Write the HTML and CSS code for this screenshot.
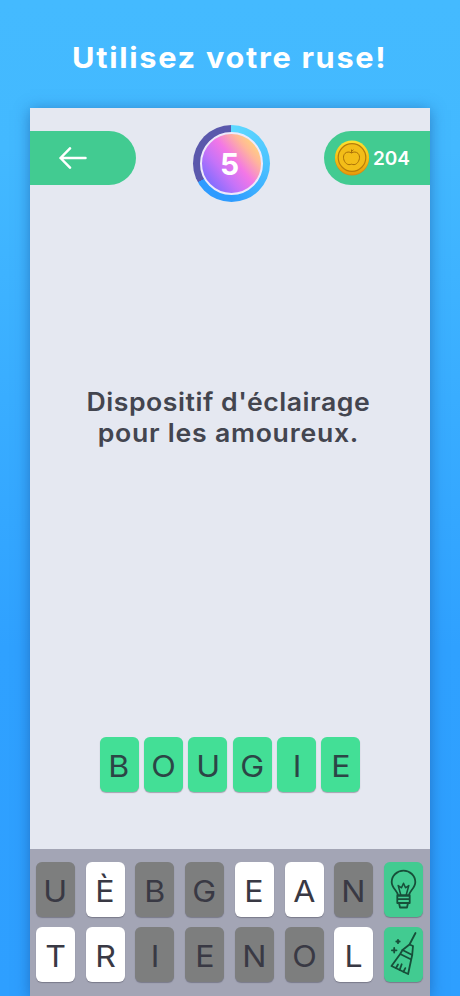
FILE: index.html
```html
<!DOCTYPE html>
<html lang="fr">
<head>
  <meta charset="UTF-8" />
  <meta name="viewport" content="width=device-width, initial-scale=1.0" />
  <title>Utilisez votre ruse!</title>
  <link rel="stylesheet" href="styles.css">
</head>
<body>
  <h1>Utilisez votre ruse!</h1>

  <main class="phone">
    <header>
      <button class="pill back" aria-label="Retour">
        <svg width="28" height="22" viewBox="0 0 28 22" fill="none" stroke="#fff" stroke-width="2.5" stroke-linecap="round" stroke-linejoin="round"><path d="M26.5 11H1.5M11 1.3L1.5 11l9.5 9.7"/></svg>
      </button>
      <div class="level"><div class="level-inner"><span>5</span></div></div>
      <div class="pill coins">
        <svg width="36" height="36" viewBox="0 0 36 36">
          <defs><linearGradient id="gold" x1="0" y1="0" x2="0" y2="1"><stop offset="0" stop-color="#ffe22e"/><stop offset=".55" stop-color="#f6c013"/><stop offset="1" stop-color="#e79b0c"/></linearGradient></defs>
          <circle cx="18" cy="18.5" r="17" fill="#d98c10"/>
          <circle cx="18" cy="17.5" r="17" fill="url(#gold)"/>
          <circle cx="18" cy="17.5" r="13.8" fill="#f3bd18" stroke="#b77d0b" stroke-width="1.2"/>
          <path d="M17.500 13c-2-1.400-4.800-1.300-6.500.4-2.700 2.800-1.500 7.800 1.500 10.300 1.600 1.300 3.200 1 5 .5 1.800.5 3.400.8 5-.5 3-2.500 4.200-7.500 1.500-10.300-1.700-1.700-4.500-1.800-6.500-.4zM17.500 13V9.500M17.500 11.500l2-1.800" fill="none" stroke="#a97008" stroke-width="1"/>
        </svg>
        <span>204</span>
      </div>
    </header>

    <p class="clue">Dispositif d'éclairage<br><span class="line2">pour les amoureux.</span></p>

    <div class="answer">
      <div class="tile ok"><span>B</span></div>
      <div class="tile ok"><span>O</span></div>
      <div class="tile ok"><span>U</span></div>
      <div class="tile ok"><span>G</span></div>
      <div class="tile ok"><span>I</span></div>
      <div class="tile ok"><span>E</span></div>
    </div>

    <div class="keyboard">
      <div class="tile used"><span>U</span></div>
      <div class="tile"><span>È</span></div>
      <div class="tile used"><span>B</span></div>
      <div class="tile used"><span>G</span></div>
      <div class="tile"><span>E</span></div>
      <div class="tile"><span>A</span></div>
      <div class="tile used"><span>N</span></div>
      <div class="tile help">
        <svg width="39" height="56" viewBox="0 0 39 56" fill="none" stroke="#174f39" stroke-width="1.8" stroke-linejoin="round" stroke-linecap="round">
          <path d="M14 33.5c0-4.500-6.300-7-6.300-13.500a11.800 11.300 0 0 1 23.600 0c0 6.500-6.300 9-6.300 13.500z"/>
          <path d="M16.8 33l-2.600-9.500 3.300 2.300 2-4.500 2 4.500 3.300-2.300-2.600 9.500" stroke-width="1.5"/>
          <path d="M13.3 33.500h12.400v3.700H13.300zM13.300 37.200h12.400v3.800H13.300zM15 41l1 4.500h7l1-4.500"/>
        </svg>
      </div>
      <div class="tile"><span>T</span></div>
      <div class="tile"><span>R</span></div>
      <div class="tile used"><span>I</span></div>
      <div class="tile used"><span>E</span></div>
      <div class="tile used"><span>N</span></div>
      <div class="tile used"><span>O</span></div>
      <div class="tile"><span>L</span></div>
      <div class="tile help">
        <svg width="39" height="56" viewBox="0 0 39 56" fill="none" stroke="#174f39" stroke-width="1.8" stroke-linejoin="round" stroke-linecap="round">
          <path d="M31.5 6l-6 11.500M25.500 17.500l-7 5.500 9.700 5 .8-9z"/>
          <path d="M18.500 23l-2.300 4 11 5.500 1-4.500M16.200 27L7.500 39l16.600 8 3.100-14.500"/>
          <path d="M12 41l2-3.500M15.700 42.800l2-5.500M19.500 44.700l1.800-3.600"/>
          <path d="M14 12.800v3.400M12.300 14.500h3.400M10.200 21v4.600M7.900 23.300h4.600"/>
        </svg>
      </div>
    </div>
  </main>
</body>
</html>
```
FILE: styles.css
```css
* { box-sizing: border-box; margin: 0; padding: 0; }
body {
  height: 996px;
  overflow: hidden;
  display: flex;
  flex-direction: column;
  align-items: center;
  font-family: Inter, "Open Sans", sans-serif;
  color: #43454f;
  background: linear-gradient(#44baff, #43b9ff 15%, #2fa1ff 65%, #2e9fff);
}
h1 {
  height: 108px;
  padding-top: 40px;
  color: #fff;
  font-size: 29px;
  line-height: 36px;
  font-weight: 700;
  letter-spacing: 1.6px;
  white-space: nowrap;
  transform: scaleX(1.06);
}
.phone {
  width: 400px;
  height: 888px;
  display: flex;
  flex-direction: column;
  background: #e5e8f1;
  box-shadow: 0 2px 14px rgba(20, 70, 140, .5);
}
header {
  height: 94px;
  padding-top: 17px;
  display: flex;
  justify-content: space-between;
}
.pill {
  width: 106px;
  height: 54px;
  margin-top: 6px;
  display: flex;
  align-items: center;
  background: #42cb91;
  border: 0;
}
.back { border-radius: 0 27px 27px 0; padding-left: 29px; }
.coins {
  border-radius: 27px 0 0 27px;
  padding-left: 10px;
  gap: 3px;
  color: #fff;
  font-size: 19px;
  font-weight: 600;
}
.level {
  width: 77px;
  height: 77px;
  padding: 7px;
  margin-left: 2px;
  border-radius: 50%;
  background: conic-gradient(#5fd9ff, #4cc3ff 90deg, #2e9bff 180deg, #2e9bff 241deg, #5a58ac 241deg);
}
.level-inner {
  height: 63px;
  display: flex;
  align-items: center;
  justify-content: center;
  border: 2px solid #eee9fb;
  border-radius: 50%;
  background: linear-gradient(50deg, #7c6cff 12%, #c673f8 36%, #f377e6 55%, #ffb69a 75%, #ffd879 90%);
  color: #fff;
  font-size: 30px;
  font-weight: 700;
}
.level-inner span { padding-right: 3px; }
.clue {
  height: 535px;
  padding-top: 185px;
  padding-right: 3px;
  text-align: center;
  font-size: 25px;
  line-height: 31px;
  font-weight: 600;
  letter-spacing: .5px;
  white-space: nowrap;
  transform: scaleX(1.065);
}
.line2 { letter-spacing: .7px; }
.tile {
  width: 39px;
  height: 55px;
  display: flex;
  align-items: center;
  justify-content: center;
  padding-top: 3px;
  border-radius: 6px;
  background: #fff;
  box-shadow: 0 1px 1px rgba(60, 60, 75, .4);
  color: #393944;
  font-size: 30px;
  font-weight: 400;
}
.tile span { transform: scaleX(1.07); }
.answer {
  height: 112px;
  display: flex;
  justify-content: center;
  gap: 5.4px;
}
.tile.ok { background: #43df96; color: #2c4546; }
.tile.used { background: #7d7e7e; }
.tile.help { padding: 0; background: #42cb91; }
.keyboard {
  height: 147px;
  padding: 13px 7px 0 6px;
  display: grid;
  grid-template-columns: repeat(8, 39px);
  justify-content: space-between;
  align-content: start;
  row-gap: 10px;
  background: #a3a5b5;
}
```
